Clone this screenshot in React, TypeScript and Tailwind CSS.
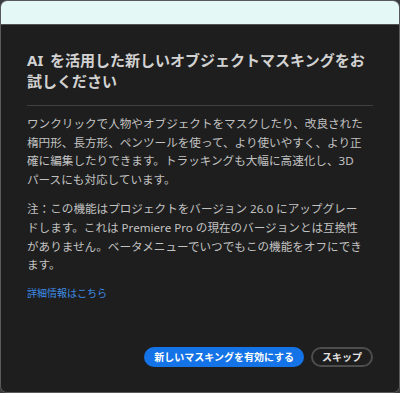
import React from "react";

const FONT = { fontFamily: '"Noto Sans", "Noto Sans CJK JP", sans-serif' };

export default function App() {
  return (
    <div className="w-[400px] h-[393px] bg-[#3a3d3e]" style={FONT}>
      <div className="w-full h-full flex flex-col border border-[#5a5a5a] rounded-[7px] overflow-hidden">
        {/* ── Title strip ─────────────────────────── */}
        <div className="h-[24px] shrink-0 bg-[#e4f8f6] border-b border-[#525252]" />

        {/* ── Dialog body ─────────────────────────── */}
        <div className="flex-1 flex flex-col bg-[#1e1e1e] px-[26px] pt-[25px] pb-[25px]">
          <h1 className="text-[15px] leading-[21px] font-bold text-[#d2d2d2] whitespace-nowrap">
            <span className="mr-[3px]">AI</span> を活用した新しいオブジェクトマスキングをお
            <br />
            試しください
          </h1>

          <div className="mt-[13px] h-px bg-[#3f3f3f]" />

          <p className="mt-[9px] text-[11.6px] leading-[18.7px] text-[#c2c2c2] whitespace-nowrap">
            ワンクリックで人物やオブジェクトをマスクしたり、改良された
            <br />
            楕円形、長方形、ペンツールを使って、より使いやすく、より正
            <br />
            確に編集したりできます。トラッキングも大幅に高速化し、3D
            <br />
            パースにも対応しています。
          </p>

          <p className="mt-[10.5px] text-[11.6px] leading-[18.7px] text-[#c2c2c2] whitespace-nowrap">
            注：この機能はプロジェクトをバージョン 26.0 にアップグレー
            <br />
            ドします。これは Premiere Pro の現在のバージョンとは互換性
            <br />
            がありません。ベータメニューでいつでもこの機能をオフにでき
            <br />
            ます。
          </p>

          <a className="mt-[9px] text-[10px] leading-[18px] text-[#3d8be3] self-start cursor-pointer">
            詳細情報はこちら
          </a>

          {/* Buttons */}
          <div className="mt-auto flex justify-end items-center gap-[7px]">
            <button className="h-[20px] px-[10px] rounded-full bg-[#1473e6] text-white text-[10px] font-bold leading-none">
              新しいマスキングを有効にする
            </button>
            <button className="h-[20px] px-[9px] rounded-full border-2 border-[#4d4d4d] text-[#e2e2e2] text-[10px] font-bold leading-none">
              スキップ
            </button>
          </div>
        </div>
      </div>
    </div>
  );
}
